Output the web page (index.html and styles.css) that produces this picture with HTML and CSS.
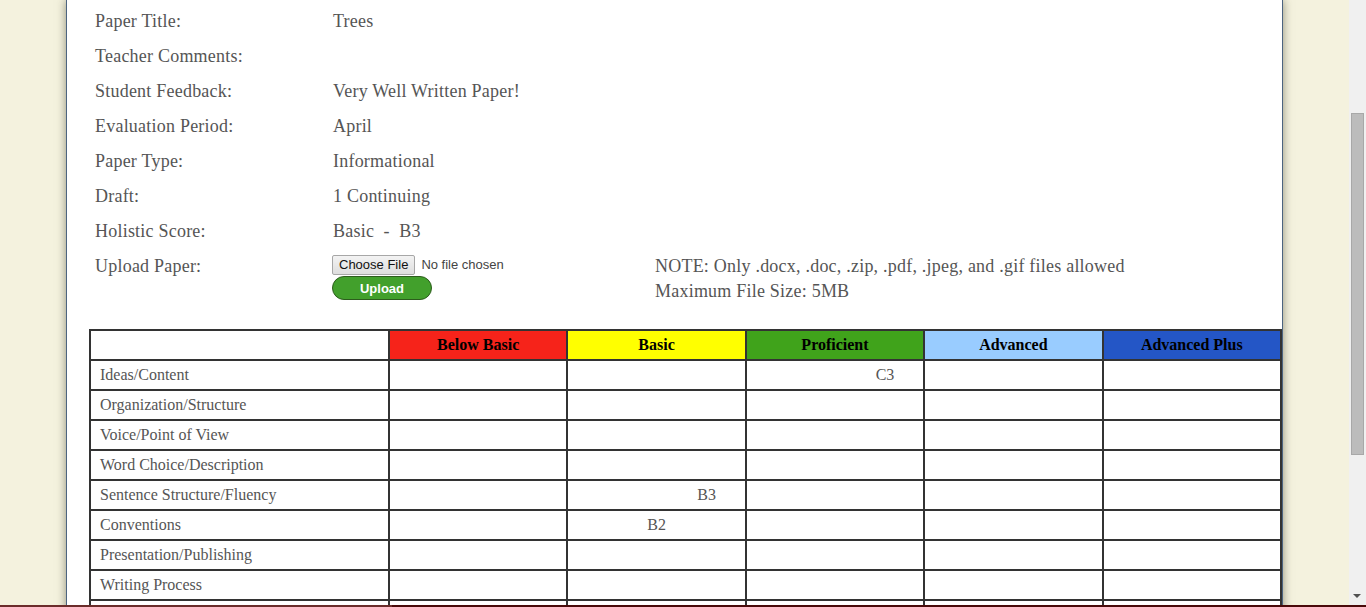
FILE: index.html
```html
<!DOCTYPE html>
<html>
<head>
<meta charset="utf-8">
<title>Paper Evaluation</title>
<link rel="stylesheet" href="styles.css">
</head>
<body>
<div class="viewport">
  <div class="page">
    <div class="sheet">
      <div class="info">
        <div class="label">Paper Title:</div><div class="value">Trees</div><div class="extra"></div>
        <div class="label">Teacher Comments:</div><div class="value"></div><div class="extra"></div>
        <div class="label">Student Feedback:</div><div class="value">Very Well Written Paper!</div><div class="extra"></div>
        <div class="label">Evaluation Period:</div><div class="value">April</div><div class="extra"></div>
        <div class="label">Paper Type:</div><div class="value">Informational</div><div class="extra"></div>
        <div class="label">Draft:</div><div class="value">1 Continuing</div><div class="extra"></div>
        <div class="label">Holistic Score:</div><div class="value">Basic &nbsp;- &nbsp;B3</div><div class="extra"></div>
        <div class="label">Upload Paper:</div>
        <div class="value upload">
          <div class="file-row">
            <button class="choose" type="button">Choose File</button>
            <span class="nofile">No file chosen</span>
          </div>
          <button class="upload-btn" type="button">Upload</button>
        </div>
        <div class="extra note">NOTE: Only .docx, .doc, .zip, .pdf, .jpeg, and .gif files allowed<br>Maximum File Size: 5MB</div>
      </div>

      <table class="rubric">
        <colgroup>
          <col class="c-first"><col><col><col><col><col>
        </colgroup>
        <thead>
          <tr>
            <th class="blank"></th>
            <th class="bb">Below Basic</th>
            <th class="ba">Basic</th>
            <th class="pr">Proficient</th>
            <th class="ad">Advanced</th>
            <th class="ap">Advanced Plus</th>
          </tr>
        </thead>
        <tbody>
          <tr><td class="trait">Ideas/Content</td><td></td><td></td><td><span class="offset">C3</span></td><td></td><td></td></tr>
          <tr><td class="trait">Organization/Structure</td><td></td><td></td><td></td><td></td><td></td></tr>
          <tr><td class="trait">Voice/Point of View</td><td></td><td></td><td></td><td></td><td></td></tr>
          <tr><td class="trait">Word Choice/Description</td><td></td><td></td><td></td><td></td><td></td></tr>
          <tr><td class="trait">Sentence Structure/Fluency</td><td></td><td><span class="offset">B3</span></td><td></td><td></td><td></td></tr>
          <tr><td class="trait">Conventions</td><td></td><td>B2</td><td></td><td></td><td></td></tr>
          <tr><td class="trait">Presentation/Publishing</td><td></td><td></td><td></td><td></td><td></td></tr>
          <tr><td class="trait">Writing Process</td><td></td><td></td><td></td><td></td><td></td></tr>
          <tr><td class="trait">&nbsp;</td><td></td><td></td><td></td><td></td><td></td></tr>
        </tbody>
      </table>
    </div>
  </div>
  <div class="scrollbar">
    <div class="track"><div class="thumb"></div></div>
    <div class="arrow-down"></div>
  </div>
</div>
<div class="footer-edge"><span class="seg1"></span><span class="seg2"></span></div>
</body>
</html>
```
FILE: styles.css
```css
html, body {
  margin: 0;
  padding: 0;
  height: 100%;
  overflow: hidden;
}
body {
  background: #f4f2de;
  font-family: "Liberation Serif", "Times New Roman", serif;
  color: #555;
}
.viewport {
  display: flex;
  height: 607px;
}
.page {
  flex: 1;
  overflow: hidden;
}
.sheet {
  margin-left: 66px;
  width: 1215px;
  min-height: 800px;
  background: #fff;
  border-left: 1px solid #4c6480;
  border-right: 1px solid #4c6480;
  box-shadow: 0 0 9px rgba(60, 60, 40, 0.55);
  padding-top: 10px;
}
.info {
  display: grid;
  grid-template-columns: 238px 322px 1fr;
  grid-auto-rows: 35px;
  padding-left: 28px;
  font-size: 18px;
  letter-spacing: 0.22px;
  line-height: 22px;
}
.label, .value, .extra {
  color: #555;
}
.upload {
  margin-left: -1px;
}
.file-row {
  display: flex;
  align-items: center;
  gap: 6px;
  margin-top: -1px;
  letter-spacing: 0;
}
.choose {
  font-family: "Liberation Sans", Arial, sans-serif;
  font-size: 13px;
  height: 20px;
  padding: 0 6px;
  border: 1px solid #a7a7a7;
  border-radius: 2px;
  background: linear-gradient(#f3f3f3, #dedede);
  color: #111;
  line-height: 18px;
}
.nofile {
  font-family: "Liberation Sans", Arial, sans-serif;
  font-size: 13px;
  color: #444;
}
.upload-btn {
  display: block;
  margin-top: 0;
  width: 100px;
  height: 24px;
  border: 1px solid #2d5c1d;
  border-radius: 12px;
  background: #42a02c;
  color: #fff;
  font-family: "Liberation Sans", Arial, sans-serif;
  font-weight: bold;
  font-size: 13px;
  letter-spacing: 0;
  padding: 0;
}
.note {
  line-height: 25px;
  margin-top: -1px;
}
.rubric {
  margin-top: 39px;
  margin-left: 22px;
  width: 1193px;
  border-collapse: collapse;
  table-layout: fixed;
  font-size: 16px;
}
.c-first { width: 299px; }
.rubric th, .rubric td {
  border: 2px solid #333;
  height: 28px;
  padding: 0;
}
.rubric th {
  color: #000;
  font-weight: bold;
  text-align: center;
}
.rubric td {
  text-align: center;
  color: #555;
}
.rubric td.trait {
  text-align: left;
  padding-left: 9px;
}
.offset {
  padding-left: 100px;
}
.bb { background: #f6231a; }
.ba { background: #ffff00; }
.pr { background: #40a31b; }
.ad { background: #99ccff; }
.ap { background: #2456c6; }
.scrollbar {
  width: 17px;
  background: #f0f0f0;
  display: flex;
  flex-direction: column;
}
.track {
  flex: 1;
  padding-top: 113px;
}
.thumb {
  margin-left: 2px;
  width: 11px;
  height: 340px;
  background: #bcbcbc;
  border: 1px solid #a8a8a8;
}
.arrow-down {
  height: 17px;
  position: relative;
}
.arrow-down::after {
  content: "";
  position: absolute;
  left: 4px;
  top: 4px;
  border-left: 4px solid transparent;
  border-right: 4px solid transparent;
  border-top: 4px solid #505050;
}
.footer-edge {
  position: fixed;
  left: 0;
  right: 0;
  bottom: 0;
  height: 2px;
  display: flex;
  background: #4a0a0a;
}
.seg1 {
  width: 392px;
  background: #6b2c2a;
}
.seg2 {
  flex: 1;
}
```
